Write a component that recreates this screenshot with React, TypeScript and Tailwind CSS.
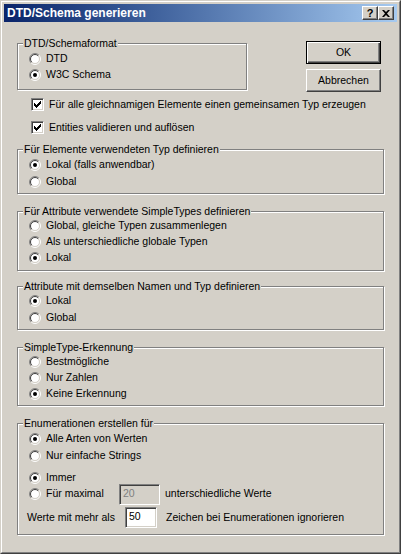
import React from "react";

// Windows classic dialog: "DTD/Schema generieren"

const Radio = ({ checked }: { checked?: boolean }) => (
  <svg width="12" height="12" viewBox="0 0 12 12" className="shrink-0">
    <circle cx="6" cy="6" r="4.5" fill="white" />
    <path d="M2.111 9.889A5.5 5.5 0 0 1 9.889 2.111" stroke="#808080" fill="none" />
    <path d="M9.889 2.111A5.5 5.5 0 0 1 2.111 9.889" stroke="white" fill="none" />
    <path d="M2.818 9.182A4.5 4.5 0 0 1 9.182 2.818" stroke="#404040" fill="none" />
    <path d="M9.182 2.818A4.5 4.5 0 0 1 2.818 9.182" stroke="#d4d0c8" fill="none" />
    {checked && <circle cx="6" cy="6" r="2" fill="black" />}
  </svg>
);

const Checkbox = ({ checked }: { checked?: boolean }) => (
  <div className="w-[13px] h-[13px] shrink-0 bg-white border border-t-[#808080] border-l-[#808080] border-r-white border-b-white shadow-[inset_1px_1px_0_#404040,inset_-1px_-1px_0_#d4d0c8] flex items-center justify-center">
    {checked && (
      <svg width="7" height="7" viewBox="0 0 7 7">
        <path d="M0 2h1v1h1v1h1v-1h1v-1h1v-1h1v-1h1v3h-1v1h-1v1h-1v1h-1v1h-1v-1h-1v-1h-1z" fill="black" />
      </svg>
    )}
  </div>
);

const RadioRow = ({ label, checked, h = "h-[17px]" }: { label: string; checked?: boolean; h?: string }) => (
  <div className={`flex items-center ${h} pl-[11px]`}>
    <Radio checked={checked} />
    <span className="ml-[5px]">{label}</span>
  </div>
);

const Group = ({ title, children, className = "" }: { title: string; children: React.ReactNode; className?: string }) => (
  <div className={`relative border border-[#808080] shadow-[1px_1px_0_white,inset_1px_1px_0_white] ${className}`}>
    <span className="absolute left-[5px] -top-[7px] px-[1px] bg-[#d4d0c8] leading-[13px] whitespace-nowrap">{title}</span>
    {children}
  </div>
);

const TitleButton = ({ children }: { children: React.ReactNode }) => (
  <div className="w-[16px] h-[14px] bg-[#d4d0c8] border border-t-white border-l-white border-r-[#404040] border-b-[#404040] shadow-[inset_-1px_-1px_0_#808080] flex items-center justify-center">
    {children}
  </div>
);

const Field = ({ value, disabled, className = "" }: { value: string; disabled?: boolean; className?: string }) => (
  <div
    className={`h-[21px] shrink-0 border border-t-[#808080] border-l-[#808080] border-r-white border-b-white shadow-[inset_1px_1px_0_#404040,inset_-1px_-1px_0_#d4d0c8] pl-[3px] pt-[2px] leading-[13px] ${
      disabled ? "bg-[#d4d0c8] text-[#808080]" : "bg-white text-black"
    } ${className}`}
  >
    {value}
  </div>
);

export default function App() {
  return (
    <div className="w-[401px] h-[554px] bg-[#d4d0c8] border border-t-[#d4d0c8] border-l-[#d4d0c8] border-r-[#404040] border-b-[#404040] font-['Liberation_Sans',Arial,sans-serif] text-[10.5px] text-black">
      <div className="h-full flex flex-col border border-t-white border-l-white border-r-[#808080] border-b-[#808080] p-[2px]">
        {/* Titelleiste */}
        <div className="h-[18px] shrink-0 flex items-center bg-linear-to-r from-[#0a246a] to-[#a6caf0] pl-[3px] pr-[3px]">
          <span className="text-white font-bold text-[12px] leading-none">DTD/Schema generieren</span>
          <div className="ml-auto flex">
            <TitleButton>
              <span className="font-bold text-[11px] leading-none text-black">?</span>
            </TitleButton>
            <TitleButton>
              <svg width="8" height="7" viewBox="0 0 8 7">
                <path d="M0 0h2l2 2l2-2h2l-3 3.5l3 3.5h-2l-2-2l-2 2h-2l3-3.5z" fill="black" />
              </svg>
            </TitleButton>
          </div>
        </div>

        {/* Inhalt */}
        <div className="flex-1 px-[13px] pt-[19px]">
          <div className="flex items-start">
            <Group title="DTD/Schemaformat" className="w-[230px] mt-[2px] pt-[7px] pb-[6px]">
              <RadioRow label="DTD" h="h-[16px]" />
              <RadioRow label="W3C Schema" checked h="h-[16px]" />
            </Group>
            <div className="ml-auto mr-[3px] flex flex-col gap-[5px]">
              <div className="w-[75px] h-[23px] border border-black shadow-[inset_1px_1px_0_white,inset_-1px_-1px_0_#404040,inset_-2px_-2px_0_#808080] flex items-center justify-center">
                OK
              </div>
              <div className="w-[75px] h-[23px] border border-t-white border-l-white border-r-[#404040] border-b-[#404040] shadow-[inset_-1px_-1px_0_#808080] flex items-center justify-center">
                Abbrechen
              </div>
            </div>
          </div>

          <div className="flex items-center h-[17px] mt-[4px] pl-[14px]">
            <Checkbox checked />
            <span className="ml-[5px] whitespace-nowrap">Für alle gleichnamigen Elemente einen gemeinsamen Typ erzeugen</span>
          </div>
          <div className="flex items-center h-[17px] mt-[6px] pl-[14px]">
            <Checkbox checked />
            <span className="ml-[5px]">Entities validieren und auflösen</span>
          </div>

          <Group title="Für Elemente verwendeten Typ definieren" className="mt-[13px] pt-[6px] pb-[3px]">
            <RadioRow label="Lokal (falls anwendbar)" checked />
            <RadioRow label="Global" />
          </Group>

          <Group title="Für Attribute verwendete SimpleTypes definieren" className="mt-[17px] pt-[6px] pb-[4px]">
            <RadioRow label="Global, gleiche Typen zusammenlegen" h="h-[16px]" />
            <RadioRow label="Als unterschiedliche globale Typen" h="h-[16px]" />
            <RadioRow label="Lokal" checked h="h-[16px]" />
          </Group>

          <Group title="Attribute mit demselben Namen und Typ definieren" className="mt-[15px] pt-[5px] pb-[3px]">
            <RadioRow label="Lokal" checked />
            <RadioRow label="Global" />
          </Group>

          <Group title="SimpleType-Erkennung" className="mt-[17px] pt-[6px] pb-[3px]">
            <RadioRow label="Bestmögliche" h="h-[16px]" />
            <RadioRow label="Nur Zahlen" h="h-[16px]" />
            <RadioRow label="Keine Erkennung" checked h="h-[16px]" />
          </Group>

          <Group title="Enumerationen erstellen für" className="mt-[17px] pt-[6px] pb-[6px]">
            <RadioRow label="Alle Arten von Werten" checked />
            <RadioRow label="Nur einfache Strings" />
            <div className="mt-[6px]">
              <RadioRow label="Immer" checked h="h-[16px]" />
            </div>
            <div className="flex items-center h-[16px] pl-[11px]">
              <Radio />
              <span className="ml-[5px] w-[73px] shrink-0">Für maximal</span>
              <Field value="20" disabled className="w-[41px]" />
              <span className="ml-[5px]">unterschiedliche Werte</span>
            </div>
            <div className="flex items-center h-[21px] mt-[5px] pl-[9px]">
              <span className="w-[98px] shrink-0">Werte mit mehr als</span>
              <Field value="50" className="w-[32px]" />
              <span className="ml-[9px]">Zeichen bei Enumerationen ignorieren</span>
            </div>
          </Group>
        </div>
      </div>
    </div>
  );
}
